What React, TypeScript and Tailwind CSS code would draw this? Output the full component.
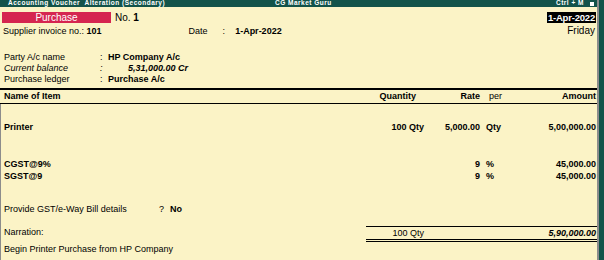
export default function App() {
  const font = { fontFamily: '"Liberation Sans", Arial, sans-serif' };

  return (
    <div className="w-[604px] h-[260px] overflow-hidden flex bg-[#13534a] text-[9px] text-black leading-none" style={font}>
      <div className="w-[599px] h-full flex flex-col bg-[#fbf3c6] border-r-2 border-[#8c8c8c]">
        {/* Title bar */}
        <div className="relative h-[7px] bg-[#13534a] flex items-center justify-between pl-[8px] pr-[3px] text-white text-[6.5px] font-bold tracking-[0.5px] overflow-hidden">
          <span>Accounting Voucher&nbsp; Alteration (Secondary)</span>
          <span className="absolute left-[275px]">CG Market Guru</span>
          <div className="flex items-center">
            <span>Ctrl + M</span>
            <span className="ml-[6px] w-[4px] h-[4px] bg-white" />
          </div>
        </div>

        {/* Voucher header */}
        <div className="flex items-start justify-between mt-[5px] pr-[1px]">
          <div className="flex flex-col">
            <div className="flex items-center">
              <div className="ml-[2px] w-[109px] h-[11px] bg-[#d52550] text-white text-[10px] flex items-center justify-center">
                Purchase
              </div>
              <span className="ml-[4px] text-[10px]">
                No. <b>1</b>
              </span>
            </div>
            <div className="flex items-center mt-[3px] pl-[3px] h-[10px]">
              <span>
                Supplier invoice no.: <b>101</b>
              </span>
              <span className="ml-[87px]">Date</span>
              <span className="ml-[15px]">:</span>
              <span className="ml-[10px] font-bold">1-Apr-2022</span>
            </div>
          </div>
          <div className="flex flex-col items-end">
            <div className="h-[11px] px-[1px] bg-black text-white text-[9.5px] font-bold flex items-center tracking-[-0.2px]">1-Apr-2022</div>
            <div className="mt-[3px] h-[10px] text-[10px] flex items-center pr-[1px]">Friday</div>
          </div>
        </div>

        {/* Ledger info */}
        <div className="mt-[16px] pl-[4px] flex flex-col">
          <div className="flex items-center h-[11px]">
            <span className="w-[96px]">Party A/c name</span>
            <span className="w-[8px]">:</span>
            <span className="font-bold">HP Company A/c</span>
          </div>
          <div className="flex items-center h-[11px] italic">
            <span className="w-[96px]">Current balance</span>
            <span className="w-[28px]">:</span>
            <span className="font-bold">5,31,000.00 Cr</span>
          </div>
          <div className="flex items-center h-[11px]">
            <span className="w-[96px]">Purchase ledger</span>
            <span className="w-[8px]">:</span>
            <span className="font-bold">Purchase A/c</span>
          </div>
        </div>

        {/* Column header */}
        <div className="mt-[3px] border-t-2 border-black border-b border-b-black h-[16px] flex items-center font-bold">
          <span className="flex-1 pl-[4px]">Name of Item</span>
          <span className="w-[80px] text-right pr-[8px]">Quantity</span>
          <span className="w-[56px] text-right">Rate</span>
          <span className="w-[39px] pl-[9px] font-normal">per</span>
          <span className="w-[78px] text-right pr-[1px]">Amount</span>
        </div>

        {/* Item rows */}
        <div className="flex-1 flex flex-col border-l border-[#8c8c8c] font-bold">
          <div className="mt-[18px] h-[11px] flex items-center">
            <span className="flex-1 pl-[3px]">Printer</span>
            <span className="w-[80px] text-right">100 Qty</span>
            <span className="w-[56px] text-right">5,000.00</span>
            <span className="w-[39px] pl-[6px]">Qty</span>
            <span className="w-[78px] text-right pr-[1px]">5,00,000.00</span>
          </div>
          <div className="mt-[25px] h-[12px] flex items-center">
            <span className="flex-1 pl-[3px]">CGST@9%</span>
            <span className="w-[56px] text-right">9</span>
            <span className="w-[39px] pl-[6px]">%</span>
            <span className="w-[78px] text-right pr-[1px]">45,000.00</span>
          </div>
          <div className="h-[12px] flex items-center">
            <span className="flex-1 pl-[3px]">SGST@9</span>
            <span className="w-[56px] text-right">9</span>
            <span className="w-[39px] pl-[6px]">%</span>
            <span className="w-[78px] text-right pr-[1px]">45,000.00</span>
          </div>

          <div className="mt-[22px] h-[11px] flex items-center font-normal pl-[3px]">
            <span className="w-[155px]">Provide GST/e-Way Bill details</span>
            <span>?</span>
            <span className="ml-[6px] font-bold">No</span>
          </div>

          <div className="mt-[11px] flex items-start font-normal">
            <span className="w-[365px] pl-[3px] pt-[2px]">Narration:</span>
            <div className="flex-1 flex flex-col">
              <div className="border-t border-black h-[13px] flex items-center">
                <span className="w-[58px] text-right">100 Qty</span>
                <span className="flex-1 text-right pr-[1px] italic font-bold">5,90,000.00</span>
              </div>
              <div className="border-t border-black" />
              <div className="border-t border-black mt-[1px]" />
            </div>
          </div>
          <div className="mt-[2px] h-[10px] flex items-center font-normal pl-[3px]">
            Begin Printer Purchase from HP Company
          </div>
        </div>
      </div>
      <div className="flex-1" />
    </div>
  );
}
